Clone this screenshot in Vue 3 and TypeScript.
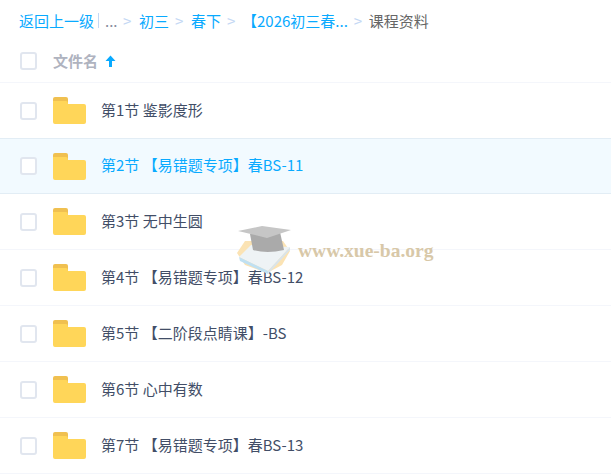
<script setup lang="ts">
const files = [
  "第1节 鉴影度形",
  "第2节 【易错题专项】春BS-11",
  "第3节 无中生圆",
  "第4节 【易错题专项】春BS-12",
  "第5节 【二阶段点睛课】-BS",
  "第6节 心中有数",
  "第7节 【易错题专项】春BS-13",
];
const activeIndex = 1;
</script>

<template>
  <div class="page">
    <div class="crumbs">
      <a class="link back">返回上一级</a>
      <span class="bar"></span>
      <span class="dots">...</span>
      <span class="sep">&gt;</span>
      <a class="link">初三</a>
      <span class="sep">&gt;</span>
      <a class="link">春下</a>
      <span class="sep">&gt;</span>
      <a class="link long">【2026初三春...</a>
      <span class="sep last-sep">&gt;</span>
      <span class="current">课程资料</span>
    </div>

    <div class="head">
      <span class="check"></span>
      <span class="head-name">文件名</span>
      <svg class="arrow" width="11" height="12" viewBox="0 0 11 12">
        <path d="M5.5 0.5 L10.5 6 H7 V12 H4 V6 H0.5 Z" fill="#09aaff" />
      </svg>
    </div>

    <div
      v-for="(name, i) in files"
      :key="name"
      class="row"
      :class="{ active: i === activeIndex }"
    >
      <span class="check"></span>
      <svg class="folder" width="33" height="27" viewBox="0 0 33 27">
        <path d="M0 2 a2 2 0 0 1 2-2 h11 a2 2 0 0 1 2 2 v5 H0 Z" fill="#f0c050" />
        <path d="M0 4 h13 q2 0 2 3 h16 a2 2 0 0 1 2 2 v16 a2 2 0 0 1-2 2 H2 a2 2 0 0 1-2-2 Z" fill="#ffd659" />
      </svg>
      <span class="name">{{ name }}</span>
    </div>

    <div class="mark">
      <svg width="56" height="50" viewBox="0 0 56 50">
        <path d="M0 28 L8 16 H46 L53 26 L45 40 L30 48 L8 40 Z" fill="#fbe3b4" />
        <path d="M2 32 L14 20 L53 22 L31 46 Z" fill="#eef3f5" />
        <path d="M2 32 L31 46 L31 49 L3 36 Z" fill="#bfe0f2" />
        <path d="M31 46 L53 22 L53 25 L31 49 Z" fill="#d9e4ea" />
        <path d="M13 9 L43 7 L47 25 Q30 29 16 25 Z" fill="#aaaaaa" />
        <path d="M1 6 L25 1 L54 5 L30 13 Z" fill="#c6c6c6" />
      </svg>
      <span class="mark-text">www.xue-ba.org</span>
    </div>
  </div>
</template>

<style scoped>
.page {
  position: relative;
  width: 611px;
  height: 474px;
  overflow: hidden;
  background: #fff;
  font-family: "Noto Sans CJK SC", sans-serif;
  font-size: 15px;
  color: #424e67;
}
.crumbs {
  display: flex;
  align-items: center;
  height: 40px;
  padding: 0 0 2px 19px;
  white-space: nowrap;
}
.link {
  color: #09aaff;
}
.back {
  width: 75px;
}
.bar {
  width: 1px;
  height: 15px;
  margin: 0 6px 0 4px;
  background: #c4d8f4;
}
.dots {
  color: #878c9c;
  width: 12px;
}
.sep {
  width: 9px;
  margin: 0 7px 0 6px;
  color: #c4d8f4;
}
.long {
  margin-left: -1px;
}
.last-sep {
  margin: 0 6px;
}
.current {
  color: #666;
}
.head {
  display: flex;
  align-items: center;
  height: 38px;
  padding: 0 0 2px 20px;
  border-bottom: 1px solid #f4f6fb;
}
.check {
  box-sizing: border-box;
  flex: none;
  width: 17px;
  height: 18px;
  border: 2px solid #e1e6ef;
  border-radius: 3px;
  background: #fff;
}
.head-name {
  margin-left: 16px;
  padding-bottom: 1px;
  color: #afb3bf;
  font-weight: 700;
}
.arrow {
  margin-left: 7px;
}
.row {
  display: flex;
  align-items: center;
  box-sizing: border-box;
  height: 56px;
  padding-left: 20px;
  border-bottom: 1px solid #f4f6fb;
}
.row.active {
  background: #f2faff;
  border-top: 1px solid #e2edf5;
  border-bottom-color: #e2edf5;
  margin-top: -1px;
}
.row.active .name {
  color: #09aaff;
}
.folder {
  flex: none;
  margin-left: 16px;
}
.name {
  margin-left: 15px;
  padding-bottom: 3px;
  white-space: pre;
}
.mark {
  position: absolute;
  left: 237px;
  top: 225px;
  display: flex;
  align-items: center;
}
.mark-text {
  margin-left: 5px;
  padding-top: 2px;
  font-family: "Liberation Serif", serif;
  font-size: 19.5px;
  font-weight: 700;
  color: #d8c8a8;
}
</style>
